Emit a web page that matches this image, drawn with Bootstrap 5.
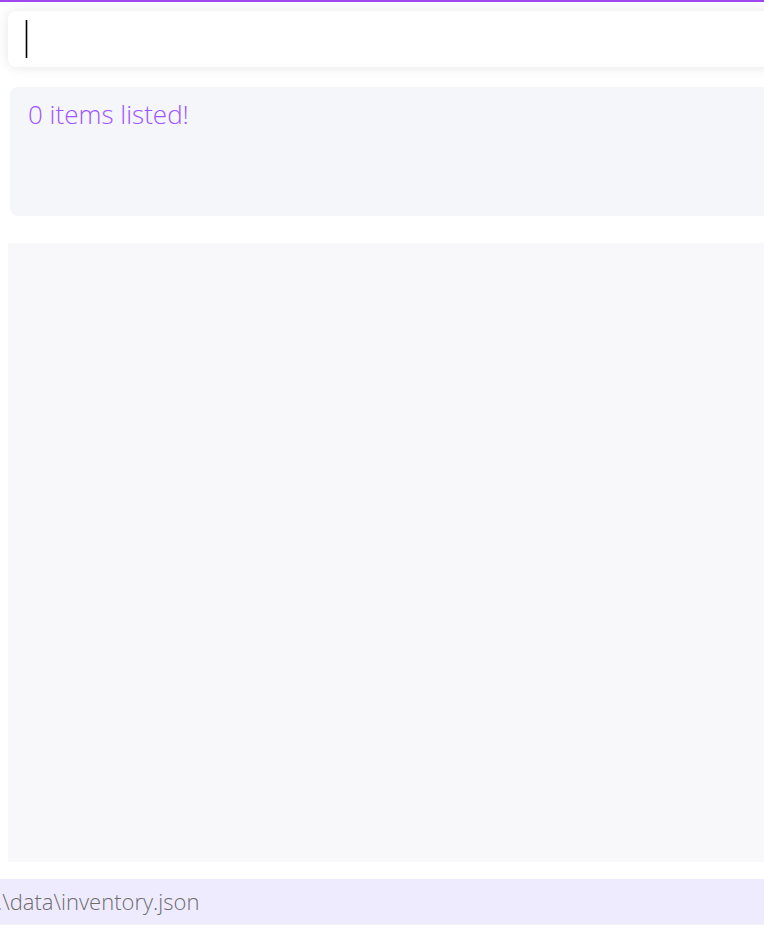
<!DOCTYPE html>
<html lang="en">
<head>
<meta charset="utf-8">
<meta name="viewport" content="width=device-width, initial-scale=1">
<title>Inventory</title>
<link href="https://cdn.jsdelivr.net/npm/bootstrap@5.3.0/dist/css/bootstrap.min.css" rel="stylesheet">
<style>
  body { font-family: "Open Sans", "Noto Sans", sans-serif; font-weight: 300; background: #fff; }
  .app-window { border-top: 2px solid #9f46ef; }
  .command-box { margin: 9px -16px 0 8px; }
  .command-input, .command-input:focus {
    height: 56px; padding-left: 18px; font-size: 26px; font-weight: 300;
    border-radius: 8px; background: #fff; caret-color: transparent;
    box-shadow: 0 0 14px rgba(0, 0, 0, .1);
  }
  .command-caret { left: 18px; top: 9px; bottom: 9px; width: 1px; background: #000; box-shadow: 1px 0 rgba(0, 0, 0, .3), -1px 0 rgba(0, 0, 0, .3); z-index: 5; }
  .result-box {
    margin: 20px 0 0 10px; height: 129px; padding: 10px 18px;
    border-radius: 8px 0 0 8px; background: #f4f6fa;
    color: #a055ff; font-size: 26px; line-height: 34px;
  }
  .item-list { margin: 27px 0 17px 8px; background: #f8f8fb; }
  .status-bar {
    height: 46px; background: #efebff; border-bottom: 1px solid #f4f4f4;
    color: #6c6c6c; font-size: 22px; line-height: 45px;
  }
  .file-path { margin-left: -3px; }
</style>
<script src="https://cdn.jsdelivr.net/npm/bootstrap@5.3.0/dist/js/bootstrap.bundle.min.js" defer></script>
</head>
<body>
<div class="app-window d-flex flex-column min-vh-100 overflow-hidden">
  <form class="command-box position-relative">
    <input type="text" class="command-input form-control border-0" aria-label="Command" autocomplete="off">
    <span class="command-caret position-absolute pe-none" aria-hidden="true"></span>
  </form>
  <output class="result-box d-block">0 items listed!</output>
  <main class="item-list flex-grow-1" aria-label="Items"></main>
  <footer class="status-bar overflow-hidden text-nowrap"><span class="file-path">.\data\inventory.json</span></footer>
</div>
</body>
</html>
